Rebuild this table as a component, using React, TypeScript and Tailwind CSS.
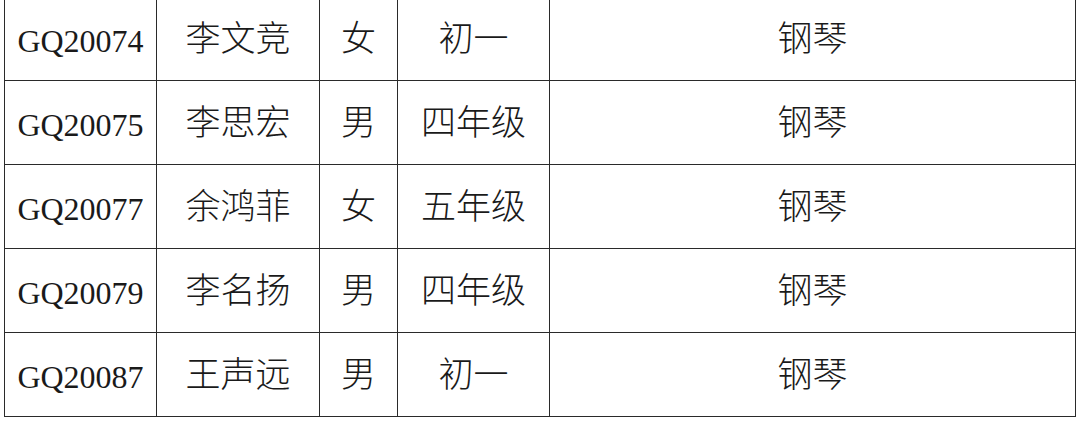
const rows = [
  { id: "GQ20074", name: "李文竞", sex: "女", grade: "初一", major: "钢琴" },
  { id: "GQ20075", name: "李思宏", sex: "男", grade: "四年级", major: "钢琴" },
  { id: "GQ20077", name: "余鸿菲", sex: "女", grade: "五年级", major: "钢琴" },
  { id: "GQ20079", name: "李名扬", sex: "男", grade: "四年级", major: "钢琴" },
  { id: "GQ20087", name: "王声远", sex: "男", grade: "初一", major: "钢琴" },
];

const cell =
  "border-[1.5px] border-[#2a2a2a] text-center pt-1 font-['Liberation_Serif','Noto_Sans_CJK_SC',serif]";

export default function App() {
  return (
    <div className="w-[1080px] h-[443px] bg-white overflow-hidden">
      <table className="w-[1071px] ml-1 -mt-1 border-collapse table-fixed text-[#1a1a1a] text-[35px] font-light">
        <colgroup>
          <col className="w-[152px]" />
          <col className="w-[163px]" />
          <col className="w-[78px]" />
          <col className="w-[152px]" />
          <col className="w-[526px]" />
        </colgroup>
        <tbody>
          {rows.map((r) => (
            <tr key={r.id} className="h-[84px]">
              <td className={cell + " text-[32px]"}>{r.id}</td>
              <td className={cell}>{r.name}</td>
              <td className={cell}>{r.sex}</td>
              <td className={cell}>{r.grade}</td>
              <td className={cell}>{r.major}</td>
            </tr>
          ))}
        </tbody>
      </table>
    </div>
  );
}
